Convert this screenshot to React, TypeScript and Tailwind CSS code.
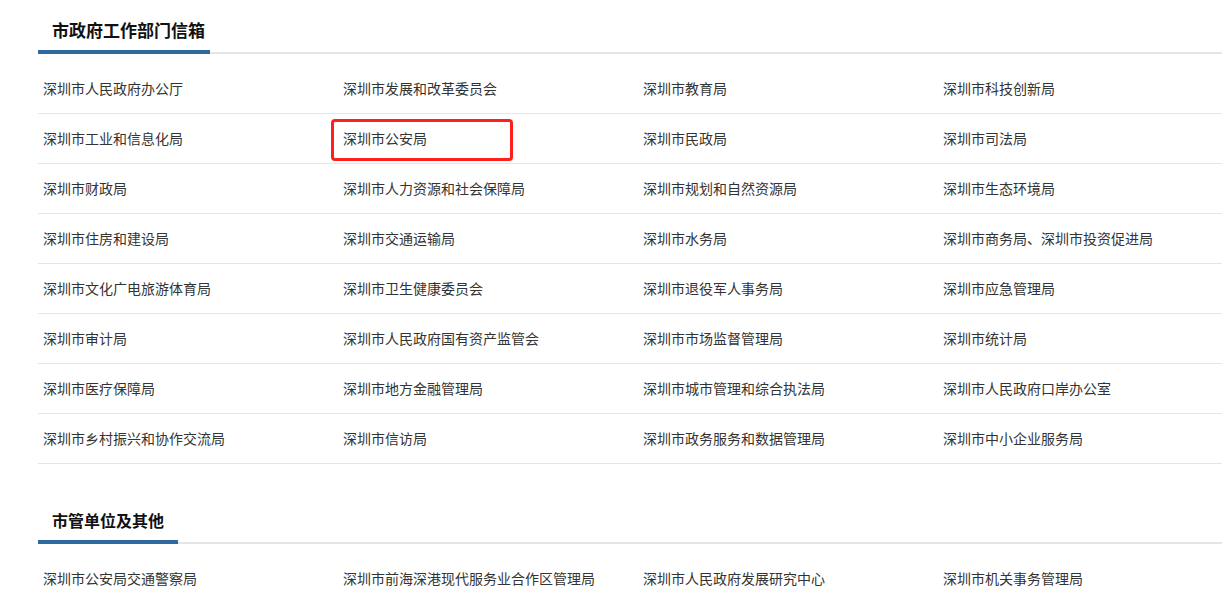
import React from "react";

const sec1: string[][] = [
  ["深圳市人民政府办公厅", "深圳市发展和改革委员会", "深圳市教育局", "深圳市科技创新局"],
  ["深圳市工业和信息化局", "深圳市公安局", "深圳市民政局", "深圳市司法局"],
  ["深圳市财政局", "深圳市人力资源和社会保障局", "深圳市规划和自然资源局", "深圳市生态环境局"],
  ["深圳市住房和建设局", "深圳市交通运输局", "深圳市水务局", "深圳市商务局、深圳市投资促进局"],
  ["深圳市文化广电旅游体育局", "深圳市卫生健康委员会", "深圳市退役军人事务局", "深圳市应急管理局"],
  ["深圳市审计局", "深圳市人民政府国有资产监管会", "深圳市市场监督管理局", "深圳市统计局"],
  ["深圳市医疗保障局", "深圳市地方金融管理局", "深圳市城市管理和综合执法局", "深圳市人民政府口岸办公室"],
  ["深圳市乡村振兴和协作交流局", "深圳市信访局", "深圳市政务服务和数据管理局", "深圳市中小企业服务局"],
];

const sec2: string[][] = [
  ["深圳市公安局交通警察局", "深圳市前海深港现代服务业合作区管理局", "深圳市人民政府发展研究中心", "深圳市机关事务管理局"],
];

function Header({ title, w, size }: { title: string; w: string; size: string }) {
  return (
    <div className="border-b-2 border-[#e5e5e5]">
      <h2
        className={`-mb-[2px] whitespace-nowrap border-b-4 border-[#2d6a9f] pl-[14px] pt-[18px] pb-[8px] font-bold leading-[24px] text-[#111] ${w} ${size}`}
      >
        {title}
      </h2>
    </div>
  );
}

function Grid({ rows, highlight }: { rows: string[][]; highlight?: string }) {
  return (
    <ul className="mt-[10px] grid grid-cols-[repeat(4,300px)]">
      {rows.flat().map((t, i) => (
        <li
          key={i}
          className="relative flex h-[50px] items-center whitespace-nowrap border-b border-[#e6e6e6] pl-[5px] text-[14px] text-[#333]"
        >
          {t}
          {highlight === t && t !== "" && (
            <span className="pointer-events-none absolute left-[-7px] top-[5px] h-[42px] w-[182px] rounded-[4px] border-[3px] border-[#ff1f1f]" />
          )}
        </li>
      ))}
    </ul>
  );
}

export default function App() {
  return (
    <div
      className="h-[594px] w-full overflow-hidden bg-white"
      style={{ fontFamily: '"Microsoft YaHei", "Noto Sans CJK SC", "Noto Sans", sans-serif' }}
    >
      <div className="ml-[38px] w-[1200px]">
        <section>
          <Header title="市政府工作部门信箱" w="w-[172px]" size="text-[17px]" />
          <Grid rows={sec1} highlight="深圳市公安局" />
        </section>
        <section className="mt-[26px]">
          <Header title="市管单位及其他" w="w-[140px]" size="text-[16px]" />
          <Grid rows={sec2} />
        </section>
      </div>
    </div>
  );
}
